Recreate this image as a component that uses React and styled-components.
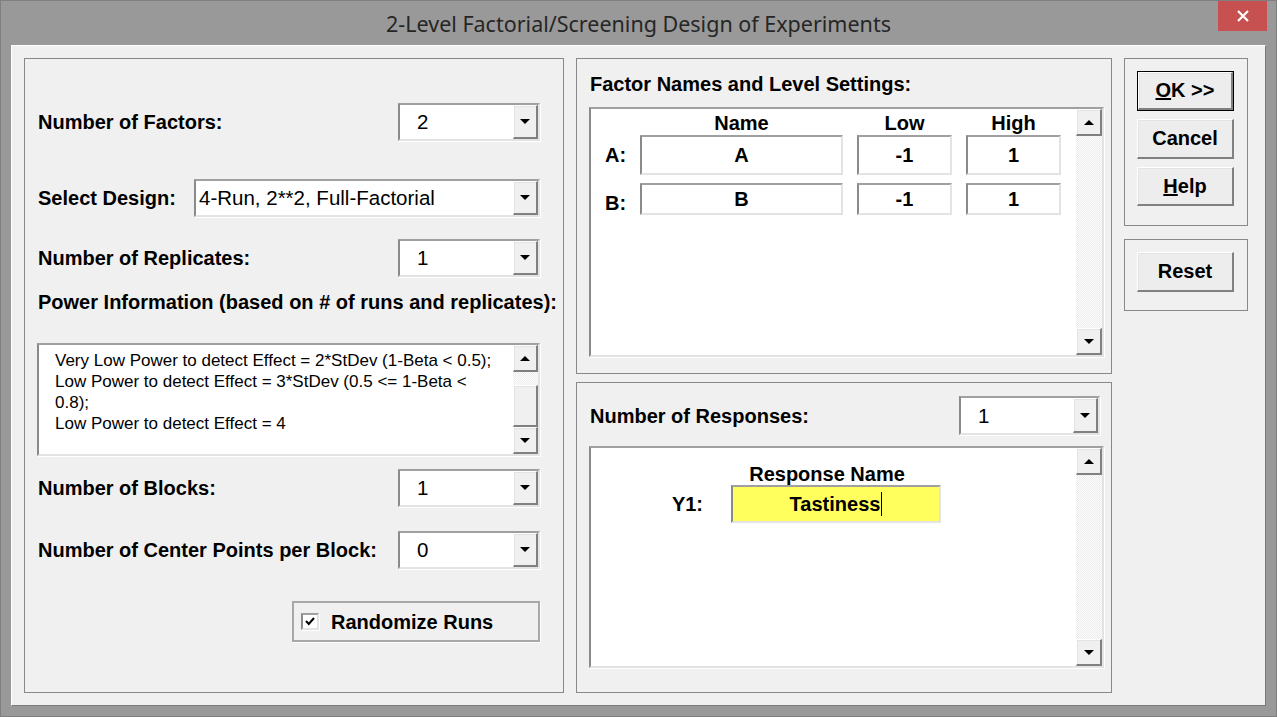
import React from "react";
import styled, { createGlobalStyle, css } from "styled-components";

const GlobalStyle = createGlobalStyle`
  html, body {
    margin: 0;
    padding: 0;
    background: #999999;
  }
  body {
    font-family: "Liberation Sans", Arial, sans-serif;
    color: #000;
  }
  #root {
    width: 1277px;
    height: 717px;
  }
`;

const sunken = css`
  box-sizing: border-box;
  border-style: solid;
  border-width: 2px;
  border-color: #a0a0a0 #e3e3e3 #e3e3e3 #8a8a8a;
  box-shadow: 1px 1px 0 #fff;
  background: #fff;
`;

const raised = css`
  box-sizing: border-box;
  background: #f0f0f0;
  border-style: solid;
  border-width: 1px 2px 2px 1px;
  border-color: #fff #808080 #808080 #fff;
  box-shadow: inset 1px 1px 0 #e3e3e3;
`;

const Window = styled.div`
  width: 1277px;
  height: 717px;
  box-sizing: border-box;
  border: 1px solid #7f7f7f;
  background: #999999;
  display: flex;
  flex-direction: column;
`;

const TitleBar = styled.div`
  height: 44px;
  flex: none;
  display: grid;
  grid-template-columns: 1fr auto 1fr;
  align-items: start;
`;

const Title = styled.div`
  grid-column: 2;
  font-family: "Noto Sans", "Open Sans", sans-serif;
  font-size: 21.5px;
  line-height: 46px;
  color: #262626;
  white-space: nowrap;
`;

const CloseButton = styled.div`
  grid-column: 3;
  justify-self: end;
  width: 49px;
  height: 30px;
  margin-right: 9px;
  background: #c75050;
  display: flex;
  align-items: center;
  justify-content: center;
`;

const Client = styled.div`
  flex: 1;
  margin: 0 10px 10px;
  border: 1px solid;
  border-color: #fff #7a7a7a #7a7a7a #fff;
  background: #f0f0f0;
  display: flex;
  gap: 12px;
  padding: 12px;
`;

const Frame = styled.div`
  box-sizing: border-box;
  border: 1px solid #888;
  display: flex;
  flex-direction: column;
`;

const LeftFrame = styled(Frame)`
  width: 540px;
  padding: 0 23px 0 13px;
`;

const MiddleColumn = styled.div`
  width: 536px;
  display: flex;
  flex-direction: column;
  gap: 8px;
`;

const FactorFrame = styled(Frame)`
  height: 316px;
  flex: none;
  padding: 0 11px 0 13px;
`;

const ResponseFrame = styled(Frame)`
  flex: 1;
  padding: 0 11px 0 13px;
`;

const RightColumn = styled.div`
  width: 124px;
  display: flex;
  flex-direction: column;
  gap: 13px;
`;

const ButtonFrame = styled(Frame)`
  height: ${(p) => p.$height}px;
  padding: 12px 0 0 12px;
  gap: 8px;
`;

const Row = styled.div`
  display: flex;
  align-items: center;
  justify-content: space-between;
  margin-top: ${(p) => p.$top}px;
  height: ${(p) => p.$height || 38}px;
  flex: none;
`;

const Label = styled.div`
  font-size: 20px;
  font-weight: bold;
  line-height: 22px;
  white-space: nowrap;
`;

const BlockLabel = styled(Label)`
  margin-top: ${(p) => p.$top}px;
`;

const Combo = styled.div`
  ${sunken};
  width: ${(p) => p.$width}px;
  height: 100%;
  display: flex;
`;

const ComboValue = styled.div`
  flex: 1;
  display: flex;
  align-items: center;
  padding-left: ${(p) => p.$pad ?? 17}px;
  font-size: 20.5px;
  white-space: nowrap;
`;

const DropButton = styled.div`
  ${raised};
  width: 25px;
  flex: none;
  display: flex;
  align-items: center;
  justify-content: center;
`;

const TriDown = styled.span`
  width: 0;
  height: 0;
  border-left: 5px solid transparent;
  border-right: 5px solid transparent;
  border-top: 5px solid #000;
`;

const TriUp = styled.span`
  width: 0;
  height: 0;
  border-left: 5px solid transparent;
  border-right: 5px solid transparent;
  border-bottom: 5px solid #000;
`;

const ListBox = styled.div`
  ${sunken};
  width: 515px;
  height: ${(p) => p.$height}px;
  margin-top: ${(p) => p.$top}px;
  margin-left: -1px;
  flex: none;
  display: flex;
`;

const TextBox = styled.div`
  ${sunken};
  height: 113px;
  margin-top: 30px;
  margin-left: -1px;
  flex: none;
  display: flex;
`;

const TextContent = styled.div`
  flex: 1;
  padding: 5px 0 0 16px;
  font-size: 17px;
  line-height: 21px;
  white-space: nowrap;
  overflow: hidden;
`;

const VScroll = styled.div`
  width: ${(p) => p.$width}px;
  flex: none;
  display: flex;
  flex-direction: column;
  background: repeating-conic-gradient(#fdfdfd 0 25%, #ececec 0 50%) 0 0 / 2px 2px;
`;

const ScrollButton = styled.div`
  ${raised};
  height: 27px;
  flex: none;
  display: flex;
  align-items: center;
  justify-content: center;
`;

const Track = styled.div`
  flex: ${(p) => (p.$size ? "none" : 1)};
  height: ${(p) => (p.$size ? `${p.$size}px` : "auto")};
`;

const Thumb = styled.div`
  ${raised};
  height: 42px;
  flex: none;
`;

const FactorGrid = styled.div`
  flex: 1;
  display: grid;
  grid-template-columns: 35px 203px 95px 95px;
  grid-template-rows: 23px 40px 40px;
  column-gap: 14px;
  align-content: start;
  padding-top: 3px;
`;

const ColHead = styled(Label)`
  text-align: center;
  align-self: end;
  line-height: 23px;
`;

const RowLabel = styled(Label)`
  padding-left: 14px;
  align-self: ${(p) => (p.$low ? "end" : "center")};
  padding-bottom: ${(p) => (p.$low ? 1 : 0)}px;
`;

const Field = styled.div`
  ${sunken};
  background: ${(p) => p.$bg || "#fff"};
  margin-top: ${(p) => p.$top || 0}px;
  display: flex;
  align-items: center;
  justify-content: center;
  font-size: 20px;
  font-weight: bold;
`;

const ResponseGrid = styled.div`
  flex: 1;
  display: grid;
  grid-template-columns: 140px 210px;
  grid-template-rows: 22px 38px;
  align-content: start;
  padding-top: 15px;
`;

const ResponseHead = styled(Label)`
  grid-column: 2;
  text-align: center;
  padding-right: 18px;
`;

const ResponseLabel = styled(Label)`
  justify-self: end;
  align-self: center;
  padding-right: 28px;
`;

const Caret = styled.span`
  display: inline-block;
  width: 1px;
  height: 24px;
  background: #000;
  margin-left: 1px;
`;

const CheckGroup = styled.div`
  box-sizing: border-box;
  width: 248px;
  height: 41px;
  margin-top: 32px;
  align-self: flex-end;
  border: 2px solid #a8a8a8;
  box-shadow: 1px 1px 0 #fff;
  display: flex;
  align-items: center;
  gap: 12px;
  padding-left: 7px;
`;

const CheckBox = styled.div`
  ${sunken};
  width: 18px;
  height: 17px;
  display: flex;
  align-items: center;
  justify-content: center;
`;

const DefaultRing = styled.div`
  width: 97px;
  height: 40px;
  box-sizing: border-box;
  border: 1px solid #000;
  display: flex;
`;

const PushButton = styled.div`
  ${raised};
  width: ${(p) => (p.$inner ? "100%" : "97px")};
  height: ${(p) => (p.$inner ? "100%" : `${p.$height || 40}px`)};
  flex: none;
  display: flex;
  align-items: center;
  justify-content: center;
  font-size: 20px;
  font-weight: bold;
  background: #ededed;
`;

const SmallCombo = ({ value }) => (
  <Combo $width={142}>
    <ComboValue>{value}</ComboValue>
    <DropButton>
      <TriDown />
    </DropButton>
  </Combo>
);

const ScrollBar = ({ width, children }) => (
  <VScroll $width={width}>
    <ScrollButton>
      <TriUp />
    </ScrollButton>
    {children || <Track />}
    <ScrollButton>
      <TriDown />
    </ScrollButton>
  </VScroll>
);

const factors = [
  { id: "A", name: "A", low: "-1", high: "1" },
  { id: "B", name: "B", low: "-1", high: "1" },
];

export default function App() {
  return (
    <>
      <GlobalStyle />
      <Window>
        <TitleBar>
          <Title>2-Level Factorial/Screening Design of Experiments</Title>
          <CloseButton>
            <svg width="12" height="12" viewBox="0 0 12 12">
              <path d="M1 1 L11 11 M11 1 L1 11" stroke="#fff" strokeWidth="2.2" />
            </svg>
          </CloseButton>
        </TitleBar>
        <Client>
          <LeftFrame>
            <Row $top={44}>
              <Label>Number of Factors:</Label>
              <SmallCombo value="2" />
            </Row>
            <Row $top={38}>
              <Label>Select Design:</Label>
              <Combo $width={346}>
                <ComboValue $pad={3}>4-Run, 2**2, Full-Factorial</ComboValue>
                <DropButton>
                  <TriDown />
                </DropButton>
              </Combo>
            </Row>
            <Row $top={22}>
              <Label>Number of Replicates:</Label>
              <SmallCombo value="1" />
            </Row>
            <BlockLabel $top={14}>
              Power Information (based on # of runs and replicates):
            </BlockLabel>
            <TextBox>
              <TextContent>
                Very Low Power to detect Effect = 2*StDev (1-Beta &lt; 0.5);
                <br />
                Low Power to detect Effect = 3*StDev (0.5 &lt;= 1-Beta &lt;
                <br />
                0.8);
                <br />
                Low Power to detect Effect = 4
              </TextContent>
              <ScrollBar width={25}>
                <Track $size={13} />
                <Thumb />
              </ScrollBar>
            </TextBox>
            <Row $top={13}>
              <Label>Number of Blocks:</Label>
              <SmallCombo value="1" />
            </Row>
            <Row $top={24}>
              <Label>Number of Center Points per Block:</Label>
              <SmallCombo value="0" />
            </Row>
            <CheckGroup>
              <CheckBox>
                <svg width="10" height="9" viewBox="0 0 10 9">
                  <path d="M1 4 L3.8 7 L9 1" stroke="#000" strokeWidth="2" fill="none" />
                </svg>
              </CheckBox>
              <Label>Randomize Runs</Label>
            </CheckGroup>
          </LeftFrame>

          <MiddleColumn>
            <FactorFrame>
              <BlockLabel $top={14}>Factor Names and Level Settings:</BlockLabel>
              <ListBox $top={12} $height={250}>
                <FactorGrid>
                  <span />
                  <ColHead>Name</ColHead>
                  <ColHead>Low</ColHead>
                  <ColHead>High</ColHead>
                  {factors.map((f, i) => (
                    <React.Fragment key={f.id}>
                      <RowLabel $low={i > 0}>{f.id}:</RowLabel>
                      <Field $top={i > 0 ? 8 : 0}>{f.name}</Field>
                      <Field $top={i > 0 ? 8 : 0}>{f.low}</Field>
                      <Field $top={i > 0 ? 8 : 0}>{f.high}</Field>
                    </React.Fragment>
                  ))}
                </FactorGrid>
                <ScrollBar width={26} />
              </ListBox>
            </FactorFrame>

            <ResponseFrame>
              <Row $top={13} $height={39}>
                <Label>Number of Responses:</Label>
                <Combo $width={141}>
                  <ComboValue>1</ComboValue>
                  <DropButton>
                    <TriDown />
                  </DropButton>
                </Combo>
              </Row>
              <ListBox $top={11} $height={222}>
                <ResponseGrid>
                  <ResponseHead>Response Name</ResponseHead>
                  <ResponseLabel>Y1:</ResponseLabel>
                  <Field $bg="#ffff5e">
                    Tastiness
                    <Caret />
                  </Field>
                </ResponseGrid>
                <ScrollBar width={26} />
              </ListBox>
            </ResponseFrame>
          </MiddleColumn>

          <RightColumn>
            <ButtonFrame $height={168}>
              <DefaultRing>
                <PushButton $inner>
                  <u>O</u>K &gt;&gt;
                </PushButton>
              </DefaultRing>
              <PushButton>Cancel</PushButton>
              <PushButton $height={39}>
                <u>H</u>elp
              </PushButton>
            </ButtonFrame>
            <ButtonFrame $height={72}>
              <PushButton>Reset</PushButton>
            </ButtonFrame>
          </RightColumn>
        </Client>
      </Window>
    </>
  );
}
